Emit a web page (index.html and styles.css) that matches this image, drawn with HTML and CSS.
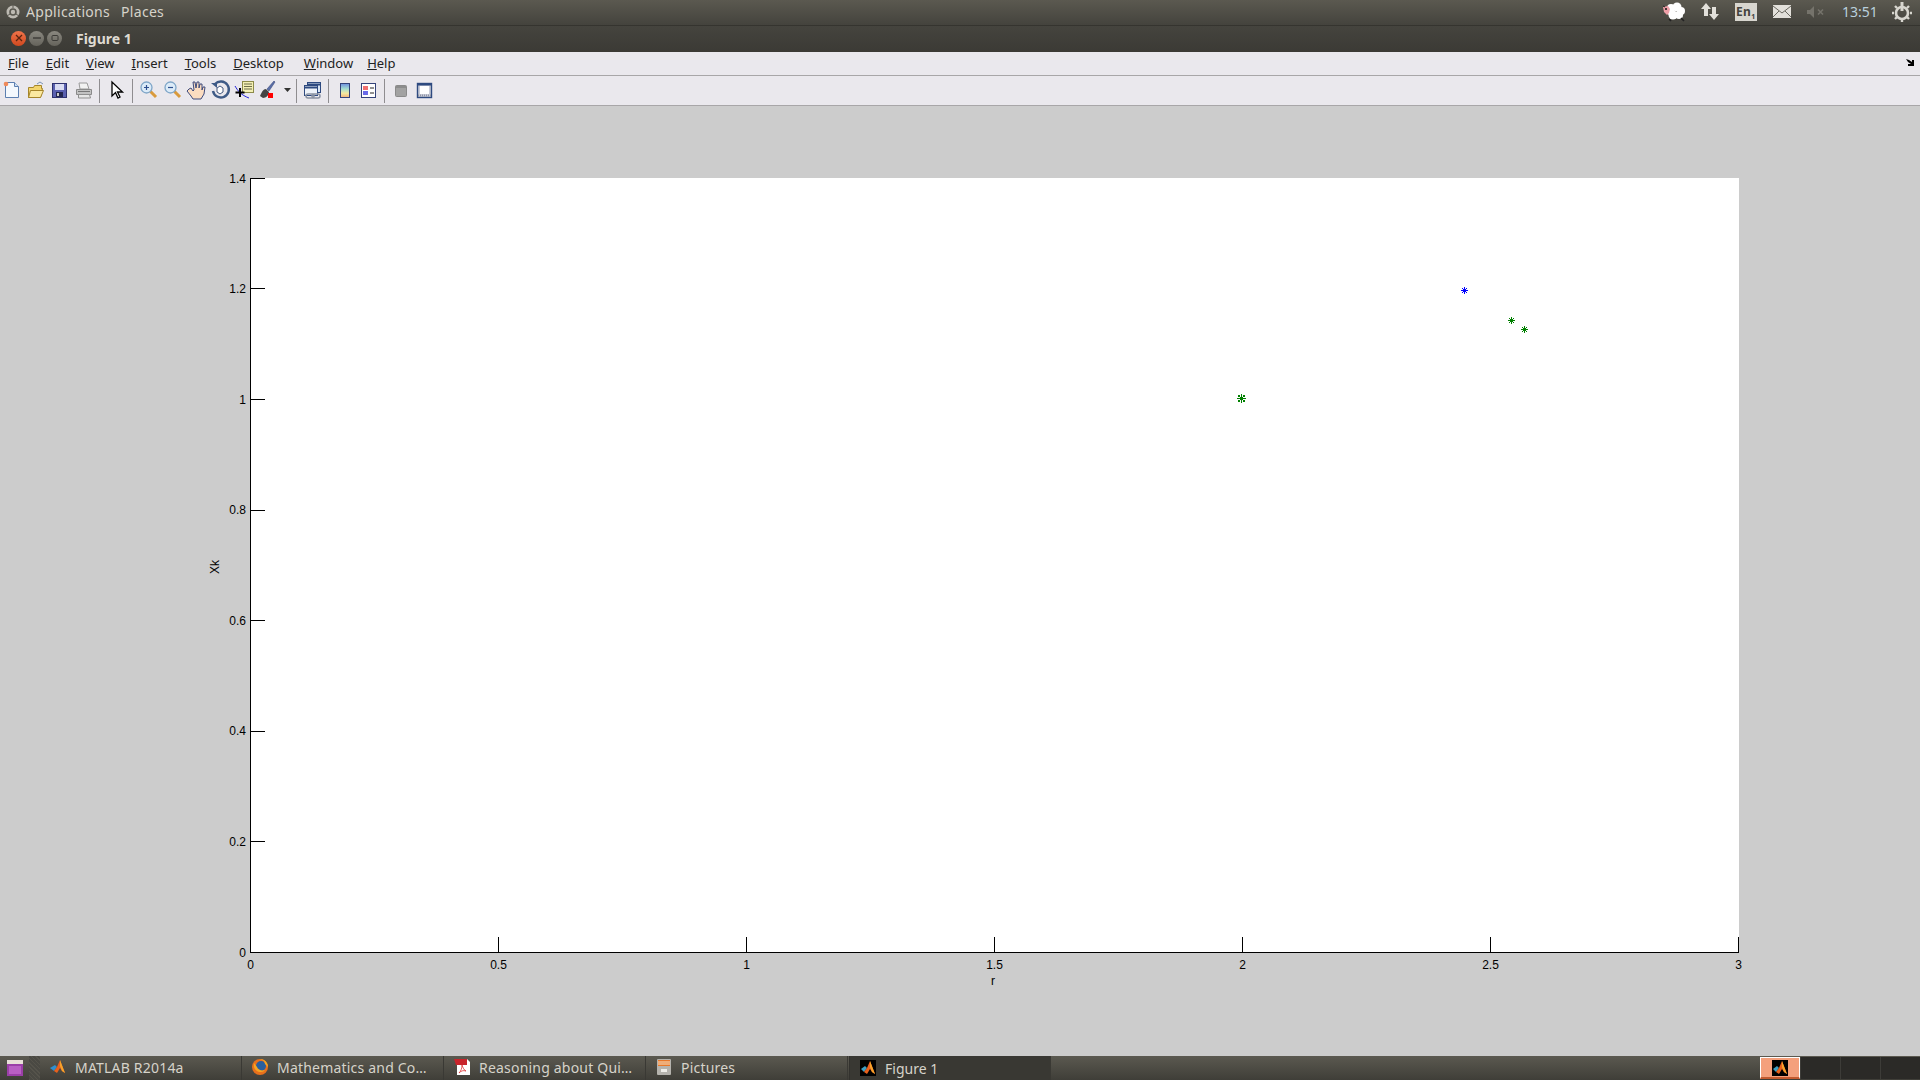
FILE: index.html

```html
<!DOCTYPE html>
<html lang="en">
<head>
  <meta charset="UTF-8">
  <title>Figure 1</title>
  <link rel="stylesheet" href="styles.css">
</head>
<body>
  <svg class="defs" width="0" height="0">
    <symbol id="matlab" viewBox="0 0 16 16">
      <rect width="16" height="16" fill="#000"/>
      <path d="M1 9l4-3 2 2-3 4z" fill="#3d9fc4"/>
      <path d="M4 12l3-4 3-7 5 13-3-2-2-3-3 5z" fill="#e8601c"/>
      <path d="M10 1l5 13-3-2-2-5z" fill="#f7a32b"/>
    </symbol>
    <symbol id="star" viewBox="0 0 7 7">
      <g fill="currentColor" shape-rendering="crispEdges">
        <rect x="3" width="1" height="7"/>
        <rect y="3" width="7" height="1"/>
        <rect x="2" y="2" width="3" height="3"/>
        <rect x="1" y="1" width="1" height="1"/>
        <rect x="5" y="1" width="1" height="1"/>
        <rect x="1" y="5" width="1" height="1"/>
        <rect x="5" y="5" width="1" height="1"/>
      </g>
    </symbol>
  </svg>

  <div class="panel">
    <svg class="logo" width="16" height="16" viewBox="0 0 16 16"><circle cx="8" cy="8" r="6.5" fill="#bdbab2"/><circle cx="8" cy="8" r="3" fill="none" stroke="#5a5850" stroke-width="1.6"/><path d="M8 1v3M2 12l3-2M14 12l-3-2" stroke="#5a5850"/></svg>
    <span class="panel-menu">Applications</span>
    <span class="panel-menu">Places</span>
    <div class="tray">
      <svg class="tray-sheep" width="24" height="20" viewBox="0 0 24 20"><g fill="#fff"><circle cx="9" cy="6" r="4"/><circle cx="15" cy="5" r="4.500"/><circle cx="19" cy="9" r="4"/><circle cx="17" cy="13" r="4"/><circle cx="11" cy="13" r="4.500"/><circle cx="8" cy="10" r="3"/></g><path d="M1 5l5-1 2 3-1 4-2 2-3-3z" fill="#ef9fa8"/><circle cx="4" cy="7" r="1" fill="#111"/><path d="M7 17l2 2M19 16l3 3" stroke="#222" stroke-width="1.6"/><path d="M1 4l2 1" stroke="#222"/></svg>
      <svg width="20" height="20" viewBox="0 0 20 20"><path d="M6 1l5 6H8v7H4V7H1zM14 18l5-6h-3V5h-4v7H9z" fill="#e2e0da"/></svg>
      <span class="lang">En<sub>1</sub></span>
      <svg class="tray-mail" width="18" height="14" viewBox="0 0 18 14"><rect width="18" height="13" fill="#e2e0da"/><path d="M0 1l9 7 9-7M0 12l6-6M18 12l-6-6" stroke="#6a6860" fill="none"/></svg>
      <svg width="18" height="12" viewBox="0 0 18 12"><path d="M0 4h3l4-4v12l-4-4H0z" fill="#75736b"/><path d="M11 3.500l5 5M16 3.500l-5 5" stroke="#75736b" stroke-width="1.600"/></svg>
      <span class="clock">13:51</span>
      <svg width="20" height="20" viewBox="0 0 20 20"><circle cx="10" cy="11" r="6" fill="none" stroke="#d8d6cf" stroke-width="2.600"/><path d="M10 0v9" stroke="#d8d6cf" stroke-width="3"/><path d="M10 16v4M2 11H0M20 11h-2M3 17l2-2M17 17l-2-2M3 4l2 2M17 4l-2 2" stroke="#d8d6cf" stroke-width="2.400"/></svg>
    </div>
  </div>

  <div class="titlebar">
    <span class="wbtn wbtn-close"><svg width="8" height="8" viewBox="0 0 8 8"><path d="M1 1l6 6M7 1L1 7" stroke="#5a2410" stroke-width="1.300"/></svg></span>
    <span class="wbtn"><svg width="8" height="8" viewBox="0 0 8 8"><path d="M0 4h8" stroke="#3b3a36" stroke-width="1.400"/></svg></span>
    <span class="wbtn"><svg width="8" height="8" viewBox="0 0 8 8"><rect x="1" y="1.500" width="6" height="5" rx="1" fill="none" stroke="#3b3a36"/></svg></span>
    <span class="title">Figure 1</span>
  </div>

  <div class="menubar">
    <span class="menu-item"><u>F</u>ile</span>
    <span class="menu-item"><u>E</u>dit</span>
    <span class="menu-item"><u>V</u>iew</span>
    <span class="menu-item"><u>I</u>nsert</span>
    <span class="menu-item"><u>T</u>ools</span>
    <span class="menu-item"><u>D</u>esktop</span>
    <span class="menu-item menu-window"><u>W</u>indow</span>
    <span class="menu-item"><u>H</u>elp</span>
    <svg class="dock" width="8" height="7" viewBox="0 0 8 7"><path d="M0 0l3 1 3 2V1l2 0v6H2V5h3L2 3z" fill="#000"/></svg>
  </div>

  <div class="toolbar">
    <span class="tool"><svg width="24" height="24" viewBox="0 0 24 24"><path d="M5.500 4.500h9l4 4v11h-13z" fill="#f4f8fd" stroke="#5c7fb0"/><path d="M14.500 4.500v4h4" fill="#cfe0f3" stroke="#5c7fb0"/><circle cx="6" cy="6" r="2.300" fill="#f08a5a"/></svg></span>
    <span class="tool"><svg width="24" height="24" viewBox="0 0 24 24"><path d="M4.500 9.500h5l1-2h7v3h1l-2 9h-12z" fill="#f3d56e" stroke="#a5852a"/><path d="M4.500 19.500l2-7h13l-3 7z" fill="#fbe9a0" stroke="#a5852a"/><path d="M13 6l3-2 3 2" fill="none" stroke="#7a93b5"/></svg></span>
    <span class="tool"><svg width="24" height="24" viewBox="0 0 24 24"><rect x="4.500" y="5.500" width="14" height="14" fill="#5a60b0" stroke="#2e326e"/><rect x="7" y="6" width="9" height="6" fill="#d9dcf2"/><rect x="8" y="14" width="7" height="5" fill="#23264f"/><rect x="9" y="15" width="2" height="3" fill="#ccc"/></svg></span>
    <span class="tool"><svg width="24" height="24" viewBox="0 0 24 24"><path d="M8 11l-1-6h8l2 6z" fill="#f2f2f2" stroke="#9a9a9a"/><path d="M4.500 11.500h15v5h-15z" fill="#c2c2c2" stroke="#8a8a8a"/><path d="M6.500 16.500h11l1 3.500h-12z" fill="#e6e6e6" stroke="#8f8f8f"/><path d="M6 13.500h12" stroke="#777"/></svg></span>
    <span class="sep sep-wide"></span>
    <span class="tool"><svg width="24" height="24" viewBox="0 0 24 24"><path d="M7.500 4.500v14l3.500-3.500 2.500 5.500 2-1-2.500-5h5z" fill="#fff" stroke="#000" stroke-width="1.300" transform="translate(-.5 -.5)"/></svg></span>
    <span class="sep"></span>
    <span class="tool"><svg width="24" height="24" viewBox="0 0 24 24"><path d="M13 13l6 6" stroke="#d99a3c" stroke-width="3"/><circle cx="9.500" cy="9.500" r="5.500" fill="#dcebf8" stroke="#7fa6c8" stroke-width="1.300"/><path d="M7 9.500h5M9.500 7v5" stroke="#2e4f8f" stroke-width="1.200"/></svg></span>
    <span class="tool"><svg width="24" height="24" viewBox="0 0 24 24"><path d="M13 13l6 6" stroke="#d99a3c" stroke-width="3"/><circle cx="9.500" cy="9.500" r="5.500" fill="#dcebf8" stroke="#7fa6c8" stroke-width="1.300"/><path d="M7 9.500h5" stroke="#2e4f8f" stroke-width="1.200"/></svg></span>
    <span class="tool"><svg width="24" height="24" viewBox="0 0 24 24"><path d="M4 11l-2 2 4 5 2 3h8l3-5 1-7-2 0-1 3V6l-2 0-1 4V4h-2l-1 6-1-6H8l1 8-1 1-2-3z" fill="#fbdcc0" stroke="#3d4a7c"/></svg></span>
    <span class="tool"><svg width="24" height="24" viewBox="0 0 24 24"><path d="M6 6a8 8 0 1 1-2 7" fill="none" stroke="#3e5a86" stroke-width="2.400"/><path d="M2 5h6v5z" fill="#3e5a86"/><path d="M8 10l3-2 3 2v4l-3 2-3-2z" fill="#fff" stroke="#44597f"/></svg></span>
    <span class="tool"><svg width="24" height="24" viewBox="0 0 24 24"><path d="M2 8c3 5 6 9 14 12" fill="none" stroke="#2222d8"/><rect x="9.500" y="3.500" width="11" height="11" fill="#f3efb4" stroke="#8c8a4a"/><path d="M11 6h8M11 8.500h8M11 11h8" stroke="#6d6d4a"/><path d="M7 10v9M2.500 14.500h9" stroke="#000" stroke-width="2"/></svg></span>
    <span class="tool"><svg width="24" height="24" viewBox="0 0 24 24"><path d="M17 3l-7 8 2 2 6-9z" fill="#5a6fa8" stroke="#3c4a7c" stroke-width=".6"/><path d="M9 11c-3 0-4 3-6 7l3 2c3 0 6-3 6-6z" fill="#444"/><rect x="11" y="15" width="5" height="5" fill="#f00"/></svg></span>
    <span class="tool-drop"><svg width="7" height="4" viewBox="0 0 7 4"><path d="M0 0h7L3.500 4z" fill="#333"/></svg></span>
    <span class="sep"></span>
    <span class="tool"><svg width="24" height="24" viewBox="0 0 24 24"><rect x="6.500" y="4.500" width="13" height="10" fill="#dbe7f4" stroke="#2e4a80"/><path d="M6.500 6.500h13" stroke="#2e4a80" stroke-width="2"/><rect x="3.500" y="7.500" width="13" height="10" fill="#eef3fa" stroke="#2e4a80"/><path d="M3.500 9.500h13" stroke="#2e4a80" stroke-width="2"/><rect x="5" y="16" width="8" height="4" rx="2" fill="none" stroke="#8a93a3" stroke-width="1.500"/><rect x="11" y="16" width="8" height="4" rx="2" fill="none" stroke="#8a93a3" stroke-width="1.500"/></svg></span>
    <span class="sep"></span>
    <span class="tool"><svg width="24" height="24" viewBox="0 0 24 24"><defs><linearGradient id="cbar" x1="0" y1="0" x2="0" y2="1"><stop offset="0" stop-color="#6d8fe0"/><stop offset=".4" stop-color="#a7e0d0"/><stop offset=".7" stop-color="#f4e9a0"/><stop offset="1" stop-color="#f2b27a"/></linearGradient></defs><rect x="7.500" y="5.500" width="9" height="14" fill="url(#cbar)" stroke="#34437a"/></svg></span>
    <span class="tool"><svg width="24" height="24" viewBox="0 0 24 24"><rect x="4.500" y="5.500" width="14" height="14" fill="#fff" stroke="#34437a"/><rect x="6" y="8" width="5" height="4" fill="#f07070"/><rect x="6" y="13" width="5" height="4" fill="#6a6ae8"/><path d="M13 10h4M13 15h4" stroke="#222"/></svg></span>
    <span class="sep"></span>
    <span class="tool"><svg width="24" height="24" viewBox="0 0 24 24"><rect x="6.500" y="7.500" width="11" height="11" rx="1" fill="#a2a2a2" stroke="#8a8a8a"/><path d="M7 8h10v2H7z" fill="#8c8c8c"/></svg></span>
    <span class="tool"><svg width="24" height="24" viewBox="0 0 24 24"><rect x="4.500" y="5.500" width="14" height="14" fill="#c9ccd8" stroke="#2e4a80" stroke-width="1.400"/><path d="M4.500 6.500h14" stroke="#2e4a80" stroke-width="2"/><rect x="7" y="8" width="9" height="8" fill="#fff"/><path d="M5 17.500h13" stroke="#8f93a3" stroke-dasharray="1 1" stroke-width="2"/></svg></span>
  </div>

  <div class="figure">
    <svg class="plot" width="1920" height="950" viewBox="0 106 1920 950">
      <rect x="250" y="178" width="1489" height="774" fill="#fff"/>
      <g class="axes">
        <path d="M250.500 178v774.500H1738.500V937"/>
        <path d="M250.500 178.500h14M250.500 288.500h14M250.500 399.500h14M250.500 510.500h14M250.500 620.500h14M250.500 731.500h14M250.500 841.500h14"/>
        <path d="M498.500 952v-15M746.500 952v-15M994.500 952v-15M1242.500 952v-15M1490.500 952v-15"/>
      </g>
      <g class="ticks ticks-y">
        <text x="246" y="183">1.4</text>
        <text x="246" y="293">1.2</text>
        <text x="246" y="404">1</text>
        <text x="246" y="514">0.8</text>
        <text x="246" y="625">0.6</text>
        <text x="246" y="735">0.4</text>
        <text x="246" y="846">0.2</text>
        <text x="246" y="957">0</text>
      </g>
      <g class="ticks ticks-x">
        <text x="250.500" y="969">0</text>
        <text x="498.500" y="969">0.5</text>
        <text x="746.500" y="969">1</text>
        <text x="994.500" y="969">1.5</text>
        <text x="1242.500" y="969">2</text>
        <text x="1490.500" y="969">2.5</text>
        <text x="1738.500" y="969">3</text>
      </g>
      <text class="label" x="993" y="985">r</text>
      <text class="label" transform="translate(219 567) rotate(-90)">Xk</text>
      <use href="#star" x="1237" y="394" width="9" height="9" color="#008000"/>
      <use href="#star" x="1461" y="287" width="7" height="7" color="#0000ff"/>
      <use href="#star" x="1508" y="317" width="7" height="7" color="#008000"/>
      <use href="#star" x="1521" y="326" width="7" height="7" color="#008000"/>
    </svg>
  </div>

  <div class="taskbar">
    <svg class="show-desktop" width="16" height="16" viewBox="0 0 16 16"><rect width="16" height="16" fill="#9b3fa8"/><rect width="16" height="4" fill="#e8e0d8"/><rect x="2" y="6" width="12" height="8" fill="#b95fc4"/></svg>
    <span class="grip"></span>
    <div class="task">
      <svg width="16" height="16" viewBox="0 0 16 16"><path d="M0 9l5-3 2 2-3 4z" fill="#2f8fd0"/><path d="M4 12l3-4 3-7 5 13-3-2-2-3-3 5z" fill="#e8601c"/><path d="M10 1l5 13-3-2-2-5z" fill="#f7a32b"/></svg>
      <span>MATLAB R2014a</span>
    </div>
    <div class="task">
      <svg width="16" height="16" viewBox="0 0 16 16"><circle cx="8" cy="8" r="8" fill="#e8701c"/><circle cx="9" cy="7" r="5" fill="#2a5f9e"/><path d="M8 0c5 0 8 4 8 8l-3-3-1-3zM2 4c-1 5 2 9 7 9 2 0 3-1 4-2-3 1-7 0-8-3z" fill="#f5a623"/></svg>
      <span>Mathematics and Co…</span>
    </div>
    <div class="task">
      <svg width="16" height="16" viewBox="0 0 16 16"><path d="M3 0h10l3 3v13H3z" fill="#fff"/><path d="M0 0h13v6H2z" fill="#c8242b"/><path d="M5 14c2-2 3-5 3-8 1 3 2 5 4 6-3-1-5 0-7 2z" fill="none" stroke="#d33" stroke-width=".8"/></svg>
      <span>Reasoning about Qui…</span>
    </div>
    <div class="task">
      <svg width="16" height="16" viewBox="0 0 16 16"><rect x="1" width="14" height="16" rx="1" fill="#b5b3ad"/><rect x="2" y="1" width="12" height="6" fill="#e8782a"/><path d="M2 3h12M2 5h12" stroke="#f6e3c8"/><rect x="5" y="10" width="6" height="3" fill="#efeee9"/></svg>
      <span>Pictures</span>
    </div>
    <div class="task task-active">
      <svg width="16" height="16"><use href="#matlab"/></svg>
      <span>Figure 1</span>
    </div>
    <div class="workspaces">
      <span class="ws ws-on"><svg width="16" height="16"><use href="#matlab"/></svg></span>
      <span class="ws"></span>
      <span class="ws"></span>
      <span class="ws"></span>
    </div>
  </div>
</body>
</html>
```

FILE: styles.css

```css
* { box-sizing: border-box; }
html, body { margin: 0; height: 1080px; overflow: hidden; }
body { display: flex; flex-direction: column; font-family: "Noto Sans", sans-serif; background: #ccc; }
svg { display: block; flex: none; }
.defs { position: absolute; }

.panel { height: 26px; display: flex; align-items: center; padding: 0 0 2px 5px; color: #d6d3ca; font-size: 14px; letter-spacing: .3px; background: linear-gradient(#5b5950, #44433d); border-bottom: 1px solid #35342f; }
.panel-menu { margin-left: 5px; margin-right: 6px; }
.tray { margin-left: auto; display: flex; align-items: center; gap: 15px; height: 100%; padding-right: 8px; }
.tray-sheep { margin-right: -1px; }
.tray-mail { margin-right: 1px; }
.lang { width: 22px; height: 18px; margin-right: 1px; background: #d8d6cf; color: #44433d; font: bold 12px/18px "Noto Sans", sans-serif; padding-left: 1px; white-space: nowrap; }
.lang sub { font-size: 7px; line-height: 0; }
.clock { width: 37px; margin: 0 -2px 0 2px; color: #b9d0dd; font-size: 14px; letter-spacing: 0; }

.titlebar { height: 26px; display: flex; align-items: center; gap: 3px; padding: 0 0 2px 11px; background: linear-gradient(#45443e, #3b3a35); }
.wbtn { width: 15px; height: 15px; border-radius: 50%; background: linear-gradient(#8a8880, #65635b); display: flex; align-items: center; justify-content: center; }
.wbtn-close { background: linear-gradient(#f0734a, #d0491f); }
.title { margin-left: 11px; color: #dfdbd2; font-size: 14px; font-weight: bold; }

.menubar { height: 24px; display: flex; align-items: center; padding: 0 0 2px 8px; background: #eae8ed; border-bottom: 1px solid #a8a6a8; font-size: 13px; color: #222; }
.menu-item { margin-right: 17px; }
.menu-window { margin-left: 3px; margin-right: 14px; }
.dock { margin-left: auto; margin-right: 6px; }

.toolbar { height: 30px; display: flex; align-items: center; padding-bottom: 2px; background: #eae8ed; border-bottom: 1px solid #a8a6a8; }
.tool { width: 24px; height: 24px; }
.tool-drop { width: 12px; display: flex; justify-content: center; }
.sep { width: 8px; height: 24px; margin-top: 3px; position: relative; }
.sep::after { content: ""; position: absolute; left: 3px; top: 0; width: 1px; height: 24px; background: #8f8d90; }
.sep-wide { width: 9px; }

.figure { flex: 1; min-height: 0; background: #ccc; }
.axes { shape-rendering: crispEdges; }
.axes path { fill: none; stroke: #000; stroke-width: 1; }
.ticks, .label { font: 12px "Liberation Sans", sans-serif; fill: #000; }
.ticks-y { text-anchor: end; }
.ticks-x, .label { text-anchor: middle; }

.taskbar { height: 24px; display: flex; align-items: center; color: #d6d3ca; font-size: 14px; background: linear-gradient(#5b5950, #3f3e38); }
.show-desktop { margin-left: 7px; }
.grip { width: 11px; height: 24px; margin-left: 6px; background: repeating-linear-gradient(45deg, #55534b 0 1px, #4a4943 1px 3px); }
.task { width: 202px; height: 24px; display: flex; align-items: center; gap: 9px; padding: 0 0 2px 10px; border-right: 1px solid #3a3934; white-space: nowrap; letter-spacing: .2px; }
.task-active { padding-bottom: 0; background: #393833; border-left: 1px solid #33322e; margin-left: 1px; letter-spacing: 0; }
.workspaces { margin-left: auto; display: flex; height: 24px; padding-top: 1px; }
.ws { width: 40px; height: 22px; background: #2b2a27; border-left: 1px solid #3d3c38; display: flex; align-items: center; justify-content: center; }
.ws-on { background: #f4a07c; border: 1px solid #fff; border-bottom: 2px solid #c45a2e; }
```
